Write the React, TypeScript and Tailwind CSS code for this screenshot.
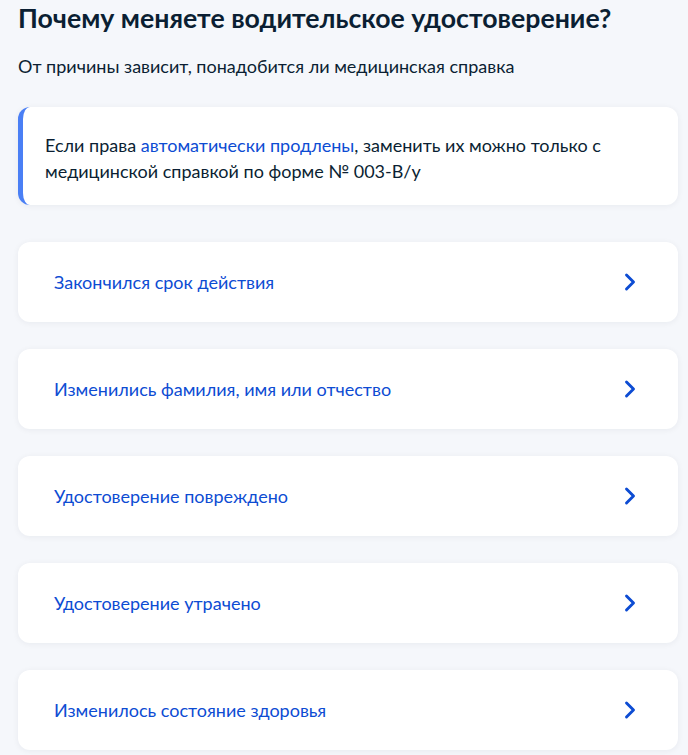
import { ChevronRight } from 'lucide-react';

const reasons = [
  'Закончился срок действия',
  'Изменились фамилия, имя или отчество',
  'Удостоверение повреждено',
  'Удостоверение утрачено',
  'Изменилось состояние здоровья',
];

export default function App() {
  return (
    <div className="min-h-screen bg-[#f5f7fb] pl-[18px] pr-[10px] text-[#0b1f33] font-['Lato','Noto_Sans',sans-serif]">
      <h1 className="pt-[1px] text-[26.7px] leading-[34px] font-bold">Почему меняете водительское удостоверение?</h1>
      <p className="mt-[19px] text-[18px] leading-[24px]">От причины зависит, понадобится ли медицинская справка</p>

      {/* Info block */}
      <div className="mt-[29px] rounded-xl bg-white border-l-[5px] border-[#4a7ff5] shadow-[0_1px_6px_rgba(11,31,51,0.06)] pl-[22px] pr-6 pt-[25px] pb-[21px] text-[18px] leading-[26px]">
        Если права <span className="text-[#0d4cd3]">автоматически продлены</span>, заменить их можно только с
        <br />
        медицинской справкой по форме № 003-В/у
      </div>

      <div className="mt-[37px] flex flex-col gap-[27px]">
        {reasons.map((r) => (
          <button
            key={r}
            type="button"
            className="h-[80px] w-full rounded-xl bg-white shadow-[0_1px_6px_rgba(11,31,51,0.06)] flex items-center justify-between pl-[36px] pr-[34px] text-left"
          >
            <span className="text-[18px] leading-[24px] text-[#0d4cd3]">{r}</span>
            <ChevronRight size={28} strokeWidth={2.5} className="text-[#0d4cd3]" />
          </button>
        ))}
      </div>
    </div>
  );
}
